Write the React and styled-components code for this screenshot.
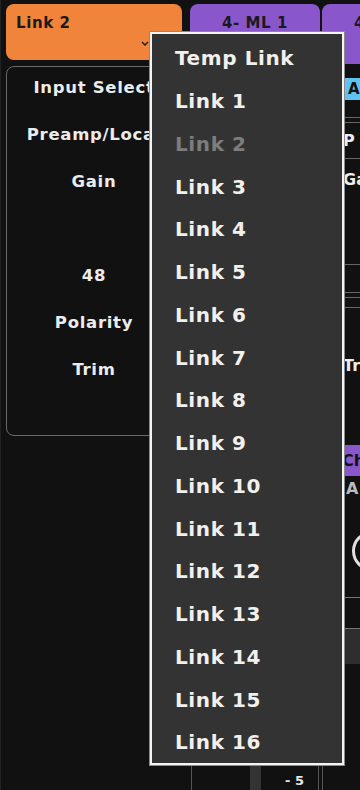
import React from "react";
import styled, { createGlobalStyle } from "styled-components";

const GlobalStyle = createGlobalStyle`
  html, body {
    margin: 0;
    padding: 0;
    background: #111111;
  }
  body {
    font-family: "DejaVu Sans", "Noto Sans", "Liberation Sans", sans-serif;
  }
`;

const Screen = styled.div`
  position: relative;
  width: 360px;
  height: 790px;
  overflow: hidden;
  background: #111111;
  border-left: 1px solid #222;
  box-sizing: border-box;
  display: flex;
  padding: 4px 0 0 5px;
`;

const Column = styled.div`
  display: flex;
  flex-direction: column;
  flex-shrink: 0;
  width: ${(p) => p.$w}px;
  margin-left: ${(p) => p.$offset || 0}px;
`;

const Tab = styled.div`
  position: relative;
  height: ${(p) => p.$h}px;
  border-radius: 8px;
  background: ${(p) => p.$color};
  color: #1a1a1a;
  font-weight: 700;
  font-size: 15px;
  letter-spacing: 0.6px;
  display: flex;
  align-items: flex-start;
  justify-content: ${(p) => (p.$center ? "center" : "flex-start")};
  padding: 10px ${(p) => (p.$center ? 0 : 10)}px 0;
  box-sizing: border-box;
  flex-shrink: 0;
  white-space: nowrap;
`;

const Chevron = styled.svg`
  position: absolute;
  right: 33px;
  bottom: 14px;
`;

const Panel = styled.div`
  margin-top: 6px;
  height: 370px;
  border: 1px solid #6a6a6a;
  border-radius: 8px;
  box-sizing: border-box;
  display: flex;
  flex-direction: column;
`;

const Label = styled.div`
  height: 47px;
  display: flex;
  align-items: center;
  justify-content: center;
  color: #ececec;
  font-weight: 700;
  font-size: 16.5px;
  letter-spacing: 0.7px;
  white-space: nowrap;
  margin-top: ${(p) => (p.$first ? -3 : 0)}px;
`;

const Strip = styled.div`
  flex: 1;
  display: flex;
  flex-direction: column;
  justify-content: flex-end;
  border-left: 1px solid #555;
  border-right: 1px solid #555;
  margin: 0 1px;
`;

const FaderRow = styled.div`
  height: 26px;
  display: flex;
  align-items: center;
  padding-left: 58px;
`;

const Track = styled.div`
  width: 11px;
  height: 100%;
  background: #333;
`;

const Scale = styled.div`
  margin-left: 24px;
  color: #e6e6e6;
  font-weight: 700;
  font-size: 13px;
  padding-top: 6px;
  white-space: pre;
`;

const Body = styled.div`
  flex: 1;
  display: flex;
  flex-direction: column;
  border-left: 1px solid #555;
  padding-left: 17px;
`;

const Pill = styled.div`
  margin-top: 14px;
  height: 22px;
  background: ${(p) => p.$color};
  color: #111;
  font-weight: 700;
  font-size: 15px;
  border-radius: 3px;
  padding-left: 8px;
  display: flex;
  align-items: center;
`;

const Rule = styled.div`
  height: 1px;
  background: #666;
  margin-top: ${(p) => p.$gap}px;
`;

const RowText = styled.div`
  margin-top: ${(p) => p.$gap}px;
  padding-left: ${(p) => p.$indent || 3}px;
  color: ${(p) => p.$color || "#ececec"};
  font-weight: 700;
  font-size: 16px;
  line-height: 20px;
  white-space: nowrap;
`;

const Bar = styled.div`
  margin-top: ${(p) => p.$gap}px;
  height: 31px;
  background: #8a56cc;
  color: #111;
  font-weight: 700;
  font-size: 16px;
  padding-left: 2px;
  display: flex;
  align-items: center;
`;

const Knob = styled.div`
  margin-top: 32px;
  margin-left: 12px;
  width: 34px;
  height: 34px;
  border-radius: 50%;
  border: 3px solid #e0e0e0;
`;

const OutlineBox = styled.div`
  margin-top: 26px;
  height: 30px;
  border: 1px solid #777;
  border-radius: 6px;
  margin-left: -1px;
`;

const Band = styled.div`
  height: 35px;
  background: #2e2e2e;
`;

const Menu = styled.div`
  position: absolute;
  left: 149px;
  top: 32px;
  width: 194px;
  height: 733px;
  box-sizing: border-box;
  background: #333333;
  border: 2px solid #f4f4f4;
  box-shadow: 0 0 0 1px #8a8a8a;
  padding-top: 3px;
  display: flex;
  flex-direction: column;
  z-index: 10;
`;

const MenuItem = styled.div`
  height: 42.75px;
  flex-shrink: 0;
  display: flex;
  align-items: center;
  padding-left: 23px;
  font-size: 20px;
  font-weight: 700;
  letter-spacing: 0.6px;
  color: ${(p) => (p.$disabled ? "#7d7d7d" : "#f2f0ec")};
  white-space: nowrap;
`;

const links = ["Temp Link", ...Array.from({ length: 16 }, (_, i) => `Link ${i + 1}`)];

export default function App() {
  return (
    <>
      <GlobalStyle />
      <Screen>
        <Column $w={176}>
          <Tab $h={56} $color="#f0843a">
            Link 2
            <Chevron width="8" height="5" viewBox="0 0 8 5">
              <polyline points="1,1 4,4 7,1" fill="none" stroke="#1a1a1a" strokeWidth="1.4" />
            </Chevron>
          </Tab>
          <Panel>
            <Label $first>Input Select</Label>
            <Label>Preamp/Local</Label>
            <Label>Gain</Label>
            <Label />
            <Label>48</Label>
            <Label>Polarity</Label>
            <Label>Trim</Label>
          </Panel>
        </Column>

        <Column $w={130} $offset={8}>
          <Tab $h={60} $color="#8a56cc" $center>
            4- ML 1
          </Tab>
          <Strip>
            <FaderRow>
              <Track />
              <Scale>{"- 5"}</Scale>
            </FaderRow>
          </Strip>
        </Column>

        <Column $w={130} $offset={2}>
          <Tab $h={60} $color="#8a56cc" $center>
            4- ML 2
          </Tab>
          <Body>
            <Pill $color="#5ec3f2">A</Pill>
            <Rule $gap={17} />
            <Rule $gap={4} />
            <RowText $gap={8}>P</RowText>
            <Rule $gap={7} />
            <RowText $gap={11} $indent={0}>Ga</RowText>
            <Rule $gap={74} />
            <Rule $gap={27} />
            <Rule $gap={4} />
            <Rule $gap={9} />
            <RowText $gap={48} $indent={0}>Tri</RowText>
            <Bar $gap={69}>Ch</Bar>
            <RowText $gap={3} $indent={6} $color="#bbbbbb">A</RowText>
            <Knob />
            <OutlineBox />
            <Band />
          </Body>
        </Column>

        <Menu>
          {links.map((l) => (
            <MenuItem key={l} $disabled={l === "Link 2"}>
              {l}
            </MenuItem>
          ))}
        </Menu>
      </Screen>
    </>
  );
}
